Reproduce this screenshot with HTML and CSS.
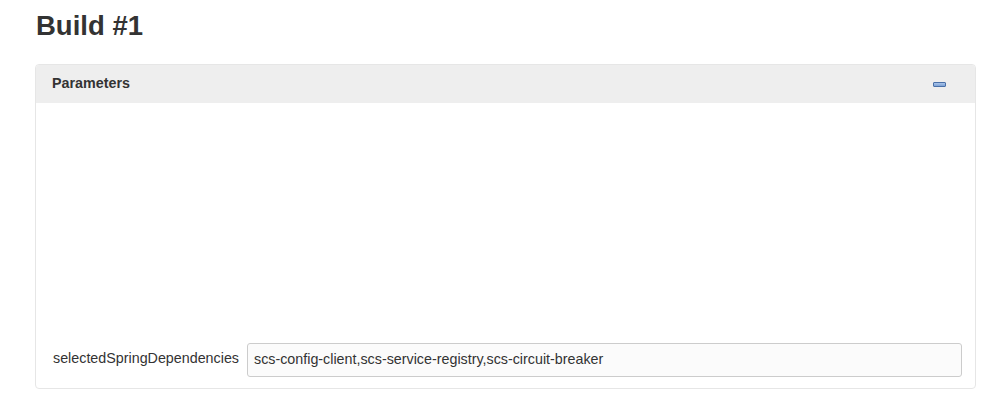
FILE: index.html
```html
<!DOCTYPE html>
<html>
<head>
<meta charset="utf-8">
<title>Build #1</title>
<link rel="stylesheet" href="styles.css">
</head>
<body>
<div class="page">
  <h1 class="title">Build #1</h1>
  <section class="panel">
    <div class="panel-head">
      <span class="panel-title">Parameters</span>
      <span class="collapse" title="Collapse"></span>
    </div>
    <div class="panel-body">
      <div class="spacer"></div>
      <div class="param-row">
        <label class="param-label">selectedSpringDependencies</label>
        <input class="param-input" type="text" value="scs-config-client,scs-service-registry,scs-circuit-breaker" readonly>
      </div>
    </div>
  </section>
</div>
</body>
</html>
```

FILE: styles.css
```css
html, body {
  margin: 0;
  padding: 0;
  background: #fff;
}
body {
  font-family: "Liberation Sans", Arial, sans-serif;
  color: #333;
  font-size: 14.3px;
}
.page {
  padding: 9px 14px 0 35px;
}
.title {
  margin: 0 0 21px 1px;
  font-size: 27.5px;
  line-height: 34px;
  font-weight: bold;
  color: #333;
}
.panel {
  border: 1px solid #e6e6e6;
  border-radius: 4px;
  overflow: hidden;
}
.panel-head {
  display: flex;
  align-items: center;
  justify-content: space-between;
  height: 38px;
  padding: 0 29px 2px 16px;
  box-sizing: border-box;
  background: #eeeeee;
}
.panel-title {
  font-weight: bold;
  font-size: 14.3px;
  line-height: 36px;
  color: #333;
}
.collapse {
  display: block;
  width: 13px;
  height: 5px;
  box-sizing: border-box;
  border: 1px solid #4a70a8;
  border-radius: 1px;
  background: linear-gradient(#a9c4ea, #7ea3d6);
  margin-top: 2px;
}
.panel-body {
  padding: 0 13px 11px 17px;
}
.spacer {
  height: 240px;
}
.param-row {
  display: flex;
  align-items: center;
}
.param-label {
  width: 194px;
  flex: none;
  font-size: 14.3px;
  color: #333;
  position: relative;
  top: -2px;
}
.param-input {
  flex: 1;
  height: 34px;
  box-sizing: border-box;
  border: 1px solid #cccccc;
  border-radius: 3px;
  background: #fbfbfb;
  padding: 0 6px 2px;
  font-family: "Liberation Sans", Arial, sans-serif;
  font-size: 14.3px;
  color: #333;
  outline: none;
}
```
